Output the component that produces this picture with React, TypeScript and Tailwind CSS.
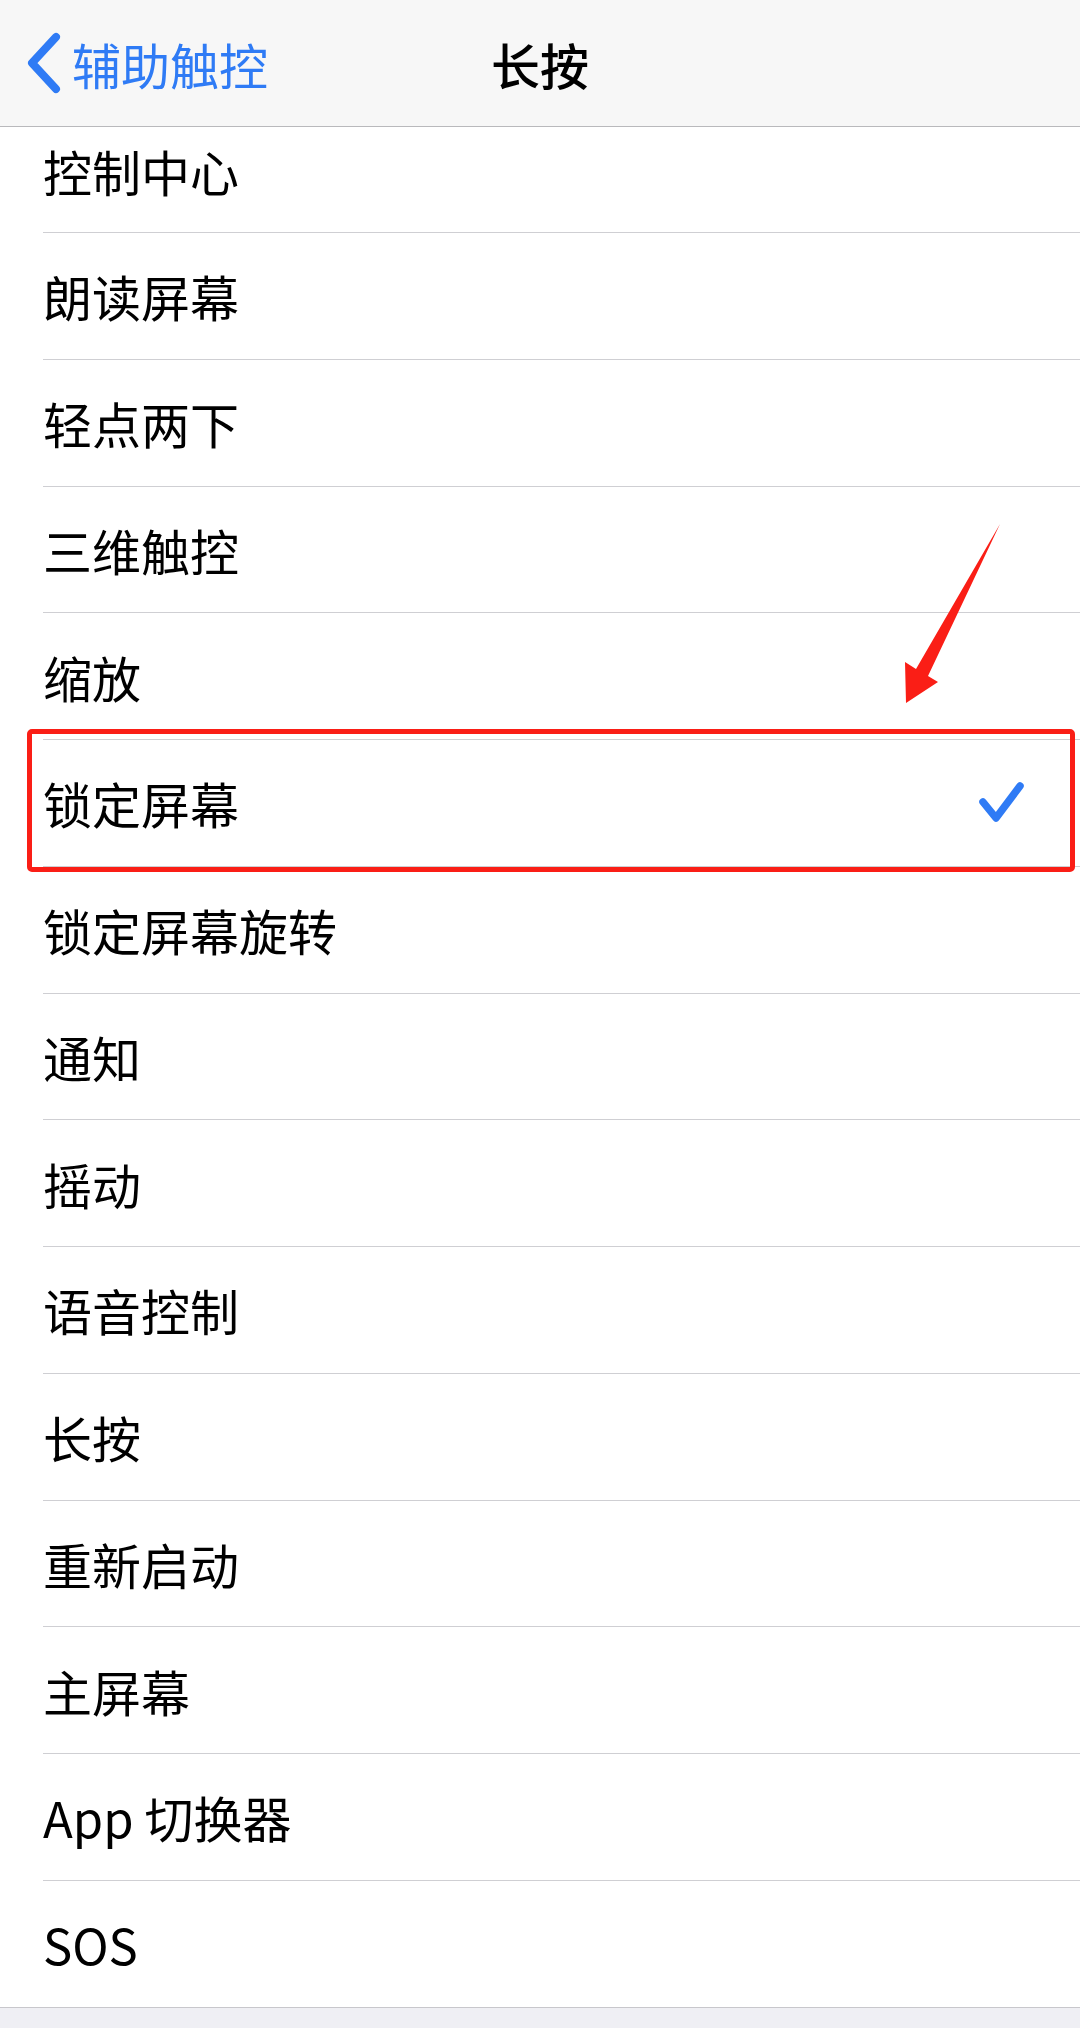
import React from 'react';

const items = [
  '朗读屏幕',
  '轻点两下',
  '三维触控',
  '缩放',
  '锁定屏幕',
  '锁定屏幕旋转',
  '通知',
  '摇动',
  '语音控制',
  '长按',
  '重新启动',
  '主屏幕',
  'App 切换器',
  'SOS',
];

const selected = '锁定屏幕';

const Check: React.FC = () => (
  <svg width="56" height="56" viewBox="0 0 56 56" fill="none">
    <path d="M9 27 L22 43 L46 11" stroke="#2f7bf5" strokeWidth="7.5" strokeLinecap="round" strokeLinejoin="round" />
  </svg>
);

export default function App() {
  return (
    <div
      className="relative w-[1080px] h-[2028px] overflow-hidden bg-[#efeff4] text-black"
      style={{ fontFamily: '"Noto Sans CJK SC", "Noto Sans", sans-serif' }}
    >
      {/* nav bar */}
      <header className="relative h-[127px] bg-[#f7f7f7] border-b border-[#b9b9bc] flex items-center justify-center">
        <div className="absolute left-0 top-0 h-full flex items-center pl-[22px]">
          <svg width="44" height="64" viewBox="0 0 44 64" fill="none">
            <path d="M34 6 L10 32 L34 58" stroke="#2f7bf5" strokeWidth="8" strokeLinecap="round" strokeLinejoin="round" />
          </svg>
          <span className="ml-[6px] text-[49px] leading-none text-[#2f7bf5]">辅助触控</span>
        </div>
        <h1 className="text-[49px] leading-none font-medium">长按</h1>
      </header>

      {/* list */}
      <div className="bg-white">
        <div className="h-[106px] flex items-center pl-[43px] pb-[20px]">
          <span className="text-[49px] leading-none">控制中心</span>
        </div>
        <div className="ml-[43px] h-px bg-[#cfcfd3] -mt-px" />
        {items.map((label, i) => {
          const last = i === items.length - 1;
          return (
            <div key={label} className="h-[126.75px] flex flex-col">
              <div className="flex-1 flex items-center justify-between pl-[43px] pr-[50px]">
                <span className="text-[49px] leading-none">{label}</span>
                {label === selected && <Check />}
              </div>
              <div className={last ? 'h-px bg-[#c8c7cc]' : 'ml-[43px] h-px bg-[#cfcfd3]'} />
            </div>
          );
        })}
      </div>

      {/* annotation box */}
      <div className="absolute left-[27px] top-[729px] w-[1048px] h-[143px] border-[5px] border-[#fa1e16] rounded-[5px]" />

      {/* annotation arrow */}
      <svg className="absolute left-0 top-0" width="1080" height="760" viewBox="0 0 1080 760">
        <polygon points="1000,524 928,676 938,682 906,703 905,662 916,669" fill="#fa1e16" />
      </svg>
    </div>
  );
}
